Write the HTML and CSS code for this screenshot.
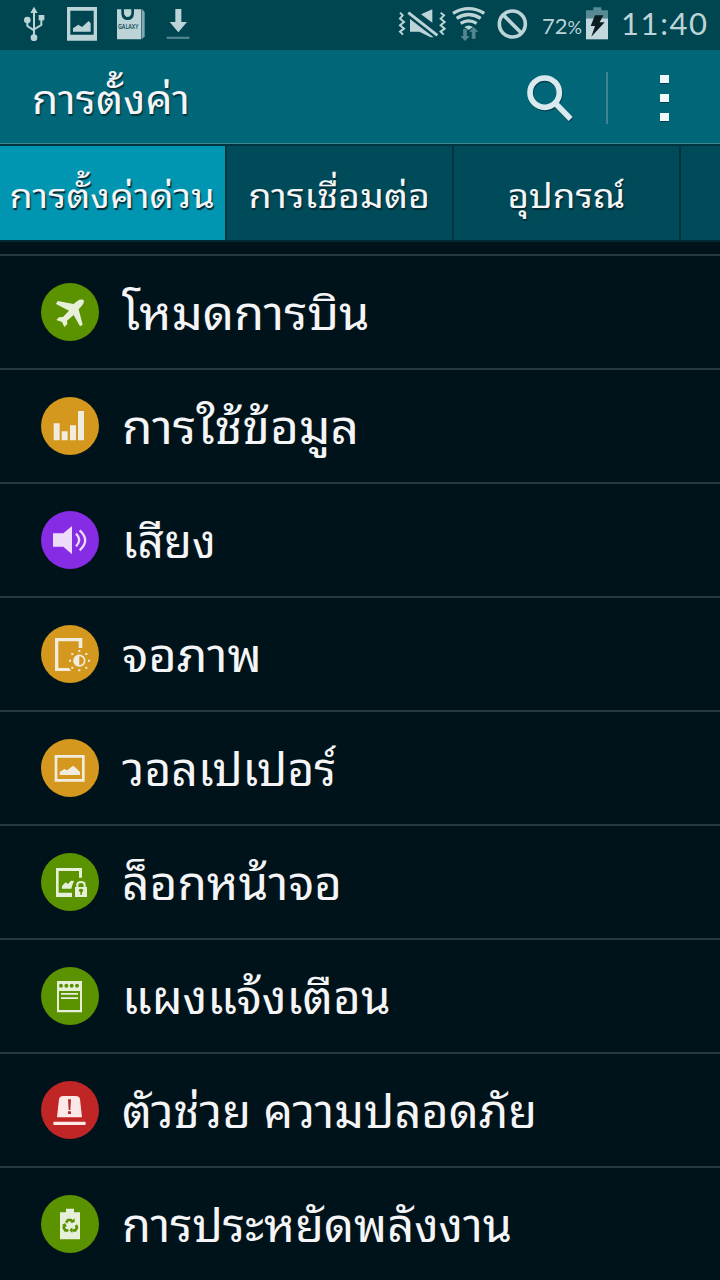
FILE: index.html
```html
<!DOCTYPE html>
<html lang="th">
<head>
    <meta charset="UTF-8">
    <meta name="viewport" content="width=device-width, initial-scale=1.0">
    <title>การตั้งค่า</title>
    <link rel="stylesheet" href="styles.css">
</head>
<body>
    <div class="status-bar">
        <!-- usb, picture, galaxy apps, download -->
        <svg class="status-left" width="240" height="50" viewBox="0 0 720 150" fill="#bcd3d8">
            <path d="M102 20l11 19h-22z"/>
            <path d="M102 35v75M82 62v16l20 13M124 55v20l-22 13" fill="none" stroke="#bcd3d8" stroke-width="6"/>
            <circle cx="82" cy="60" r="10"/>
            <path d="M116 45h17v16h-17z"/>
            <circle cx="102" cy="113" r="10"/>
            <path fill-rule="evenodd" d="M201 21h90v101h-90zM211 32v72h70V32z"/>
            <path d="M219 95v-10l16-11 11 7 20-18 6 7v25z"/>
            <path d="M351 28h13v13q2 19 19 19t19-19V28h22v90h-73z"/>
            <path d="M372 28h22v12q-2 11-11 11t-11-11z"/>
            <path d="M426 27l8 9v73l-8 8z" opacity=".7"/>
            <text class="galaxy" x="354" y="86" textLength="61" lengthAdjust="spacingAndGlyphs">GALAXY</text>
            <path d="M526 27h18v39h17l-26 31-26-31h17z"/>
            <path d="M500 110h68v7h-68z" fill="#4d828b"/>
        </svg>
        <div class="status-right">
            <!-- muted with vibration, wifi, blocked -->
            <svg width="150" height="50" viewBox="50 0 450 150" fill="none" stroke="#bcd3d8">
                <path d="M156 28v40l-34-25zM89 57l71 55h-9l-34-17H89z" fill="#bcd3d8" stroke="none"/>
                <path d="M84 38l87 68" stroke="#004650" stroke-width="14"/>
                <path d="M84 38l87 68" stroke-width="9"/>
                <path d="M59 38l8 8-8 10 12 10-12 10 12 10-12 9 9 9M181 38l10 8-10 10 12 10-12 10 12 10-12 9 9 9" stroke-width="6"/>
                <path d="M218 40q47-28 94 0M229 55q36-23 72 0M241 70q24-15 48 0" stroke-width="10"/>
                <path d="M252 81q13-9 26 0l-13 9z" fill="#bcd3d8" stroke="none"/>
                <path d="M248 86h12v22h9l-15 16-14-16h8zM274 117V96h-8l14-16 15 16h-9v21z" fill="#538790" stroke="#004650" stroke-width="1"/>
                <circle cx="396" cy="72" r="39" stroke-width="11"/>
                <path d="M369 45l54 54" stroke-width="11"/>
            </svg>
            <span class="percent">72<small>%</small></span>
            <svg class="battery" width="22" height="34" viewBox="624 20 66 102">
                <path d="M624 30h22v-9h24v9h20v24h-66z" fill="#578b94"/>
                <path d="M624 54h66v63h-66z" fill="#c2d8dc"/>
                <path d="M651 45h25l-11 21h15l-40 43 11-32h-13z" fill="#0d1c20"/>
            </svg>
            <span class="clock">11:40</span>
        </div>
    </div>

    <header class="action-bar">
        <h1><span class="t t0">การตั้งค่า</span></h1>
        <svg class="search" width="50" height="50" viewBox="78 69 150 150" fill="none">
            <g stroke="#00444f" transform="translate(2 4)">
                <circle cx="134" cy="128" r="44" stroke-width="17"/>
                <path d="M166 160l46 47" stroke-width="17"/>
            </g>
            <g stroke="#d9e9ed">
                <circle cx="134" cy="128" r="44" stroke-width="17"/>
                <path d="M166 160l46 47" stroke-width="17"/>
            </g>
        </svg>
        <div class="separator"></div>
        <div class="more"><i></i><i></i><i></i></div>
    </header>

    <nav class="tabs">
        <div class="tab active"><span class="t t1">การตั้งค่าด่วน</span></div>
        <div class="tab"><span class="t t2">การเชื่อมต่อ</span></div>
        <div class="tab"><span class="t t3">อุปกรณ์</span></div>
        <div class="tab last"></div>
    </nav>

    <ul class="settings">
        <li>
            <svg class="icon green" viewBox="33 39 174 174">
                <path d="M161 90q3 9-8 20l-7 8 12 46-8 5-19-34-20 17 1 10-9 9-7-15-17-6 8-8 12-1 18-19-39-20 5-9 48 9 11-9q10-7 19-3z"/>
            </svg>
            <span class="t r1">โหมดการบิน</span>
        </li>
        <li>
            <svg class="icon amber" viewBox="33 381 174 174">
                <path d="M71 460h18v51H71zM95 484h18v27H95zM120 466h18v45h-18zM144 423h18v88h-18z"/>
            </svg>
            <span class="t r2">การใช้ข้อมูล</span>
        </li>
        <li>
            <svg class="icon purple" viewBox="33 33 174 174">
                <path d="M69 100h31l26-22v85l-26-23H69z"/>
                <path class="line" d="M138 101q19 19 0 38M149 91q33 30 0 60" stroke-width="7"/>
            </svg>
            <span class="t r3">เสียง</span>
        </li>
        <li>
            <svg class="icon amber" viewBox="33 375 174 174">
                <path d="M75 414h82v30h-11v-20H85v80h32l6 9H75z"/>
                <circle class="line" cx="148" cy="482" r="16" stroke-width="5"/>
                <path d="M148 466a16 16 0 0 0 0 32z"/>
                <path d="M145 450h6v6h-6zM145 508h6v6h-6zM117 479h6v6h-6zM174 479h6v6h-6zM124 459h6v6h-6zM166 459h6v6h-6zM124 500h6v6h-6zM166 500h6v6h-6z"/>
            </svg>
            <span class="t r4">จอภาพ</span>
        </li>
        <li>
            <svg class="icon amber" viewBox="33 27 174 174">
                <path class="line" d="M78 79h82v72H78z" stroke-width="8"/>
                <path d="M89 135v-9l14-9 9 4 17-14 9 7 12 12v9z"/>
            </svg>
            <span class="t r5">วอลเปเปอร์</span>
        </li>
        <li>
            <svg class="icon green" viewBox="33 369 174 174">
                <path d="M78 414h78v29h-9v-20H86v65h40v13H78z"/>
                <path d="M96 476v-8l11-11 7 5 9-10 9 1-5 12-3 11z"/>
                <path class="line" d="M142 472v-8q0-8 11-8t11 8v8" stroke-width="6"/>
                <path fill-rule="evenodd" d="M135 471h36v30h-36zM151 494h5v-8q4-2 4-5 0-5-7-5t-7 5q0 3 5 5z"/>
            </svg>
            <span class="t r6">ล็อกหน้าจอ</span>
        </li>
        <li>
            <svg class="icon green" viewBox="33 21 174 174">
                <path fill-rule="evenodd" d="M81 63h75v94H81zM87 93v57h63V93z"/>
                <g fill="#5b9200">
                    <circle cx="93" cy="77" r="6"/><circle cx="109" cy="77" r="6"/><circle cx="125" cy="77" r="6"/><circle cx="141" cy="77" r="6"/>
                </g>
                <path d="M93 99h51v5H93zM93 112h51v5H93z"/>
            </svg>
            <span class="t r7">แผงแจ้งเตือน</span>
        </li>
        <li>
            <svg class="icon red" viewBox="33 363 174 174">
                <path d="M81 472l6-54q2-10 13-10h37q11 0 13 10l6 54z"/>
                <rect x="70" y="485" width="97" height="10" rx="3"/>
                <path d="M114 418h9l-2 32h-5zM114 454h9v8h-9z" fill="#b22b2b"/>
            </svg>
            <span class="t r8">ตัวช่วย ความปลอดภัย</span>
        </li>
        <li>
            <svg class="icon green" viewBox="33 30 174 174">
                <path d="M90 82h18V71h24v11h18v81H90z"/>
                <g fill="none" stroke="#5b9200" stroke-width="8">
                    <path d="M108 113l6-8h9l6 7"/>
                    <path d="M115 136h-9l-5-8 4-8M138 120l3 8-5 8h-9"/>
                </g>
                <path d="M121 112h13v-12zM95 121l10-7 6 11zM127 127v17l-9-8z" fill="#5b9200"/>
            </svg>
            <span class="t r9">การประหยัดพลังงาน</span>
        </li>
    </ul>
</body>
</html>
```
FILE: styles.css
```css
* {
    box-sizing: border-box;
}
body {
    margin: 0;
    width: 720px;
    height: 1280px;
    overflow: hidden;
    background-color: #00131a;
    color: #f5f5f7;
    font-family: "Noto Sans Thai Looped", "Noto Sans Thai", "Loma", "Garuda", "Noto Sans", sans-serif;
}
.status-bar {
    display: flex;
    justify-content: space-between;
    height: 50px;
    background-color: #004650;
    color: #bcd3d8;
}
.status-right {
    display: flex;
    align-items: center;
    width: 323px;
    font-family: Lato, sans-serif;
}
.galaxy {
    font: 600 19px "Open Sans", sans-serif;
    fill: #004650;
}
.percent {
    width: 42px;
    margin-left: -5px;
    font-size: 22px;
    white-space: nowrap;
}
.percent small {
    font-size: 18px;
}
.battery {
    margin: -3px 13px 0 2px;
}
.clock {
    margin-bottom: 4px;
    font-size: 31px;
    letter-spacing: 1.6px;
}
.action-bar {
    display: flex;
    align-items: center;
    height: 96px;
    padding-left: 32px;
    background-color: #006678;
    border-bottom: 2px solid #00343f;
    box-shadow: inset 0 -1px #3d8794;
}
h1 {
    flex: 1;
    margin: 0 0 2px;
    font-size: 40px;
    font-weight: normal;
    text-shadow: 1px 2px 1px #003640;
}
/* the labels are set a little wider than the font draws them */
.t {
    display: inline-block;
    white-space: nowrap;
    transform-origin: left center;
}
.t0 { transform: scaleX(1.068); }
.t1 { transform: scaleX(1.114); }
.t2 { transform: scaleX(1.105); }
.t3 { transform: scaleX(1.083); }
.r1 { transform: scaleX(1.089); }
.r2 { transform: scaleX(1.104); }
.r3 { transform: scaleX(1.02); }
.r4 { transform: scaleX(1.087); }
.r5 { transform: scaleX(1.03); }
.r6 { transform: scaleX(1.063); }
.r7 { transform: scaleX(1.06); }
.r8 { transform: scaleX(1.043); }
.r9 { transform: scaleX(1.046); }
.search {
    margin: 2px 30px 0 0;
}
.separator {
    width: 2px;
    height: 52px;
    margin: 2px 52px 0 0;
    background-color: #3d8593;
}
.more {
    display: flex;
    flex-direction: column;
    gap: 11px;
    margin: 2px 51px 0 0;
}
.more i {
    width: 9px;
    height: 8px;
    background-color: #f0f7f8;
    box-shadow: 0 1px #00414d;
}
.tabs {
    display: flex;
    height: 96px;
    background-color: #004b59;
    border-bottom: 2px solid #002b35;
}
.tab {
    display: flex;
    flex: none;
    align-items: center;
    justify-content: center;
    width: 227px;
    padding-bottom: 2px;
    border-right: 2px solid #00343e;
    font-size: 34px;
    text-shadow: 1px 2px 1px #002a33;
}
.tab .t {
    transform-origin: center;
}
.tab.active {
    background-color: #0095b0;
}
.tab.last {
    width: 39px;
    border-right: none;
}
.settings {
    margin: 12px 0 0;
    padding: 0;
    list-style: none;
}
.settings li {
    display: flex;
    align-items: center;
    height: 114px;
    padding-left: 41px;
    border-top: 2px solid #263940;
    font-size: 45px;
}
.settings .t {
    margin-bottom: 4px;
}
.icon {
    flex: none;
    width: 58px;
    height: 58px;
    margin-right: 23px;
    border-radius: 50%;
    fill: #f0ecdf;
}
.icon .line {
    fill: none;
    stroke: #f0ecdf;
}
.green {
    background-color: #5b9200;
    fill: #e6f0d8;
}
.green .line {
    stroke: #e6f0d8;
}
.amber {
    background-color: #d3981d;
}
.purple {
    background-color: #862ce4;
    fill: #ecdcfa;
}
.purple .line {
    stroke: #ecdcfa;
}
.red {
    background-color: #c12626;
    fill: #fde8e8;
}
```
